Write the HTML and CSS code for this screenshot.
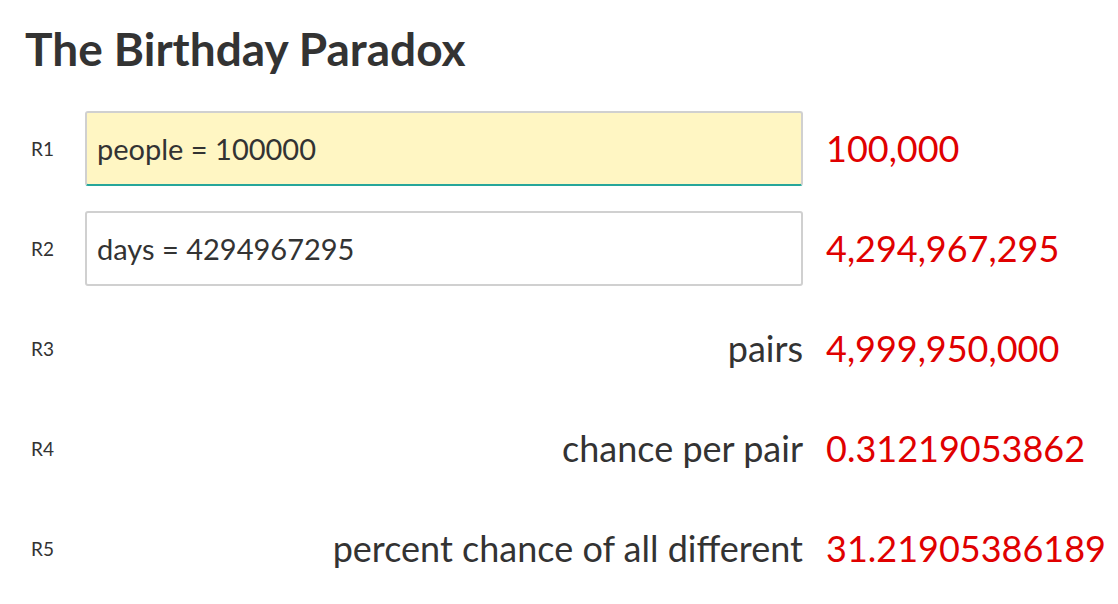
FILE: index.html
```html
<!DOCTYPE html>
<html lang="en">
<head>
    <meta charset="UTF-8">
    <title>The Birthday Paradox</title>
    <link rel="stylesheet" href="styles.css">
</head>
<body>
    <h1>The Birthday Paradox</h1>

    <div class="sheet">
        <div class="row">
            <span class="ref">R1</span>
            <div class="cell"><input type="text" class="expr focused" value="people = 100000"></div>
            <span class="value">100,000</span>
        </div>
        <div class="row">
            <span class="ref">R2</span>
            <div class="cell"><input type="text" class="expr" value="days = 4294967295"></div>
            <span class="value">4,294,967,295</span>
        </div>
        <div class="row">
            <span class="ref">R3</span>
            <div class="cell name">pairs</div>
            <span class="value">4,999,950,000</span>
        </div>
        <div class="row">
            <span class="ref">R4</span>
            <div class="cell name">chance per pair</div>
            <span class="value">0.31219053862</span>
        </div>
        <div class="row">
            <span class="ref">R5</span>
            <div class="cell name">percent chance of all different</div>
            <span class="value">31.21905386189</span>
        </div>
    </div>
</body>
</html>
```

FILE: styles.css
```css
body {
    font-family: Lato, "Noto Sans", sans-serif;
    color: #333;
    background: white;
    margin: 0;
    padding: 0 0 0 25px;
}
h1 {
    font-size: 46px;
    font-weight: bold;
    margin: 0;
    padding-top: 22px;
    line-height: 54px;
    color: #333;
}
.sheet {
    margin-top: 22px;
}
.row {
    display: grid;
    grid-template-columns: 37px 718px auto;
    column-gap: 23px;
    align-items: center;
    height: 100px;
}
.ref {
    font-size: 19px;
    padding-left: 6px;
    color: #333;
}
.cell {
    font-size: 36px;
}
.name {
    text-align: right;
}
.expr {
    box-sizing: border-box;
    width: 100%;
    height: 75px;
    font-family: inherit;
    font-size: 29px;
    color: #333;
    padding: 0 10px;
    border: 2px solid #d0d0d0;
    border-radius: 3px;
    background: white;
    outline: none;
}
.expr.focused {
    background: #fff6c3;
    border-bottom-color: #26a69a;
}
.value {
    font-size: 36px;
    color: #e00000;
    white-space: nowrap;
}
```
